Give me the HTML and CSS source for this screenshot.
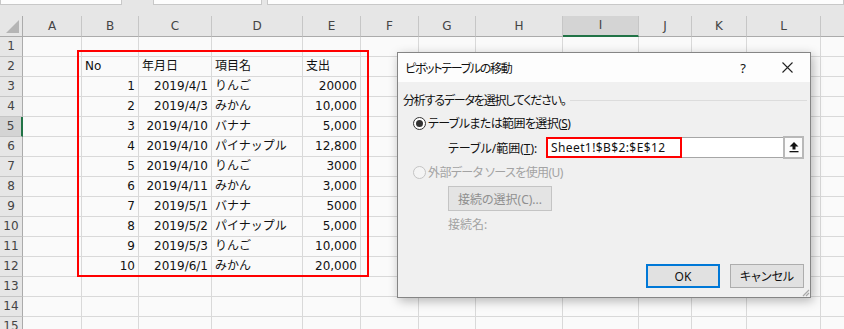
FILE: index.html
```html
<!DOCTYPE html>
<html lang="ja">
<head>
  <meta charset="UTF-8" />
  <meta name="viewport" content="width=device-width, initial-scale=1" />
  <title>ピボットテーブルの移動</title>
  <link rel="stylesheet" href="styles.css">
</head>
<body>
  <div class="excel">
    <div class="formula-strip">
      <div class="fbox name-box"></div>
      <div class="fbox fx-box"></div>
      <div class="fbox bar-box"></div>
    </div>

    <table class="sheet">
      <colgroup>
        <col style="width:23px"><col style="width:59px"><col style="width:57px"><col style="width:73px">
        <col style="width:91px"><col style="width:58px"><col style="width:58px"><col style="width:57px">
        <col style="width:87px"><col style="width:76px"><col style="width:53px"><col style="width:55px">
        <col style="width:74px"><col style="width:60px">
      </colgroup>
      <tr class="colhead">
        <th class="corner"><svg width="13" height="13" viewBox="0 0 13 13"><polygon points="13,0 13,13 0,13" fill="#b5b5b5"/></svg></th>
        <th>A</th><th>B</th><th>C</th><th>D</th><th>E</th><th>F</th><th>G</th><th>H</th>
        <th class="sel">I</th><th>J</th><th>K</th><th>L</th><th></th>
      </tr>
      <tr><th>1</th><td></td><td></td><td></td><td></td><td></td><td></td><td></td><td></td><td></td><td></td><td></td><td></td><td></td></tr>
      <tr><th>2</th><td></td><td>No</td><td>年月日</td><td>項目名</td><td>支出</td><td></td><td></td><td></td><td></td><td></td><td></td><td></td><td></td></tr>
      <tr><th>3</th><td></td><td class="num">1</td><td class="num">2019/4/1</td><td>りんご</td><td class="num">20000</td><td></td><td></td><td></td><td></td><td></td><td></td><td></td><td></td></tr>
      <tr><th>4</th><td></td><td class="num">2</td><td class="num">2019/4/3</td><td>みかん</td><td class="num">10,000</td><td></td><td></td><td></td><td></td><td></td><td></td><td></td><td></td></tr>
      <tr><th class="sel">5</th><td></td><td class="num">3</td><td class="num">2019/4/10</td><td>バナナ</td><td class="num">5,000</td><td></td><td></td><td></td><td></td><td></td><td></td><td></td><td></td></tr>
      <tr><th>6</th><td></td><td class="num">4</td><td class="num">2019/4/10</td><td>パイナップル</td><td class="num">12,800</td><td></td><td></td><td></td><td></td><td></td><td></td><td></td><td></td></tr>
      <tr><th>7</th><td></td><td class="num">5</td><td class="num">2019/4/10</td><td>りんご</td><td class="num">3000</td><td></td><td></td><td></td><td></td><td></td><td></td><td></td><td></td></tr>
      <tr><th>8</th><td></td><td class="num">6</td><td class="num">2019/4/11</td><td>みかん</td><td class="num">3,000</td><td></td><td></td><td></td><td></td><td></td><td></td><td></td><td></td></tr>
      <tr><th>9</th><td></td><td class="num">7</td><td class="num">2019/5/1</td><td>バナナ</td><td class="num">5000</td><td></td><td></td><td></td><td></td><td></td><td></td><td></td><td></td></tr>
      <tr><th>10</th><td></td><td class="num">8</td><td class="num">2019/5/2</td><td>パイナップル</td><td class="num">5,000</td><td></td><td></td><td></td><td></td><td></td><td></td><td></td><td></td></tr>
      <tr><th>11</th><td></td><td class="num">9</td><td class="num">2019/5/3</td><td>りんご</td><td class="num">10,000</td><td></td><td></td><td></td><td></td><td></td><td></td><td></td><td></td></tr>
      <tr><th>12</th><td></td><td class="num">10</td><td class="num">2019/6/1</td><td>みかん</td><td class="num">20,000</td><td></td><td></td><td></td><td></td><td></td><td></td><td></td><td></td></tr>
      <tr><th>13</th><td></td><td></td><td></td><td></td><td></td><td></td><td></td><td></td><td></td><td></td><td></td><td></td><td></td></tr>
      <tr><th>14</th><td></td><td></td><td></td><td></td><td></td><td></td><td></td><td></td><td></td><td></td><td></td><td></td><td></td></tr>
      <tr><th>15</th><td></td><td></td><td></td><td></td><td></td><td></td><td></td><td></td><td></td><td></td><td></td><td></td><td></td></tr>
    </table>

    <!-- red frame around the source range -->
    <div class="mark"></div>

    <div class="dialog">
      <div class="dlg-title">
        <span class="ttl">ピボットテーブルの移動</span>
        <span class="help">?</span>
        <span class="close">
          <svg width="11" height="11" viewBox="0 0 11 11"><path d="M0.5 0.5 L10.5 10.5 M10.5 0.5 L0.5 10.5" stroke="#222" stroke-width="1.1" fill="none"/></svg>
        </span>
      </div>

      <div class="dlg-body">
        <div class="group-title">
          <span class="tight">分析するデータを選択してください。</span>
          <span class="rule"></span>
        </div>

        <div class="opt">
          <span class="radio checked"></span>
          <span class="semi">テーブルまたは範囲を選択(<u>S</u>)</span>
        </div>

        <div class="range-row">
          <span class="range-label">テーブル/範囲(<u>T</u>):</span>
          <div class="range-box">
            <span class="range-val">Sheet1!$B$2:$E$12</span>
            <span class="range-mark"></span>
            <span class="pick">
              <svg width="10" height="11" viewBox="0 0 10 11"><polygon points="5,0 9.5,4.5 6.5,4.5 6.5,7.5 3.5,7.5 3.5,4.5 0.5,4.5" fill="#111"/><rect x="0.5" y="9" width="9" height="1.3" fill="#111"/></svg>
            </span>
          </div>
        </div>

        <div class="opt off">
          <span class="radio"></span>
          <span class="semi">外部データ ソースを使用(U)</span>
        </div>

        <div class="conn-btn">接続の選択(C)...</div>
        <div class="conn-name">接続名:</div>

        <div class="dlg-foot">
          <span class="btn ok">OK</span>
          <span class="btn">キャンセル</span>
        </div>
      </div>

      <svg class="grip" width="10" height="10" viewBox="0 0 10 10"><path d="M9 3 L3 9 M9 6 L6 9" stroke="#a8a8a8" stroke-width="1.2" fill="none"/></svg>
    </div>
  </div>
</body>
</html>
```

FILE: styles.css
```css
body {
  margin: 0;
  background: #e6e6e6;
  font-family: "DejaVu Sans", "Noto Sans CJK JP", sans-serif;
  overflow: hidden;
}

.excel {
  position: relative;
  width: 844px;
  height: 329px;
  overflow: hidden;
}

.formula-strip {
  height: 16px;
  display: flex;
  align-items: flex-start;
  background: #e6e6e6;
}

.fbox {
  height: 5px;
  background: #fdfdfd;
  border: 1px solid #c8c8c8;
  border-top: 0;
  box-sizing: border-box;
}

.name-box { width: 122px; }
.fx-box { width: 109px; margin-left: 31px; }
.bar-box { flex: 1; margin-left: 5px; }

.sheet {
  table-layout: fixed;
  border-collapse: separate;
  border-spacing: 0;
  width: 861px;
  font-size: 12px;
  color: #111;
}

.sheet th,
.sheet td {
  height: 19px;
  padding: 0 3px;
  line-height: 19px;
  white-space: nowrap;
  overflow: hidden;
}

.sheet td {
  background: #fafafa;
  border-right: 1px solid #d9d9d9;
  border-bottom: 1px solid #d9d9d9;
  text-align: left;
}

.sheet td.num { text-align: right; }

.sheet th {
  background: #e6e6e6;
  color: #444;
  font-weight: normal;
  text-align: center;
  padding: 0;
  border-right: 1px solid #c6c6c6;
  border-bottom: 1px solid #c6c6c6;
}

.sheet tr th:first-child {
  border-right: 1px solid #ababab;
}

.colhead th {
  border-bottom: 1px solid #ababab;
}

.colhead th.sel {
  background: #d4d4d4;
  height: 18px;
  border-bottom: 2px solid #217346;
}

.sheet tr th.sel:first-child {
  background: #d4d4d4;
  border-right: 2px solid #217346;
}

.corner {
  position: relative;
}

.corner svg {
  position: absolute;
  right: 3px;
  bottom: 3px;
}

.mark {
  position: absolute;
  left: 77px;
  top: 50px;
  width: 292px;
  height: 227px;
  border: 2px solid #f00;
  box-sizing: border-box;
}

/* dialog */
.dialog {
  position: absolute;
  left: 397px;
  top: 52px;
  width: 414px;
  height: 246px;
  box-sizing: border-box;
  border: 1px solid #858585;
  background: #f0f0f0;
  box-shadow: 2px 3px 10px rgba(0, 0, 0, 0.28);
  display: flex;
  flex-direction: column;
  font-family: "Noto Sans", "Noto Sans CJK JP", sans-serif;
  font-feature-settings: "palt";
  font-size: 12px;
  color: #111;
}

.tight { letter-spacing: -1.2px; }
.semi { letter-spacing: -0.6px; }

.dlg-title {
  height: 29px;
  flex: none;
  background: #fdfdfd;
  display: flex;
  align-items: center;
  padding-left: 7px;
}

.ttl {
  flex: 1;
  letter-spacing: -1.3px;
}

.help {
  width: 12px;
  text-align: center;
  font-size: 13px;
  margin-right: 33px;
}

.close {
  width: 11px;
  height: 11px;
  margin-right: 17px;
  display: flex;
}

.dlg-body {
  flex: 1;
  display: flex;
  flex-direction: column;
  padding: 0 6px 0 5px;
}

.group-title {
  margin-top: 10px;
  height: 16px;
  display: flex;
  align-items: center;
}

.rule {
  flex: 1;
  height: 1px;
  background: #dcdcdc;
  margin: 0 -3px 0 4px;
}

.opt {
  height: 16px;
  margin-top: 7px;
  margin-left: 10px;
  display: flex;
  align-items: center;
  gap: 2px;
}

.opt.off {
  margin-top: 6px;
  color: #a3a3a3;
}

.radio {
  width: 13px;
  height: 13px;
  box-sizing: border-box;
  border-radius: 50%;
  border: 1px solid #333;
  background: #fff;
  position: relative;
}

.radio.checked::after {
  content: "";
  position: absolute;
  left: 2px;
  top: 2px;
  width: 7px;
  height: 7px;
  border-radius: 50%;
  background: #333;
}

.opt.off .radio {
  border-color: #c4c4c4;
  background: #f4f4f4;
}

.range-row {
  margin-top: 6px;
  height: 21px;
  display: flex;
  align-items: center;
}

.range-label {
  width: 98px;
  margin-left: 45px;
}

.range-box {
  flex: 1;
  height: 21px;
  box-sizing: border-box;
  border: 1px solid #a6a6a6;
  background: #fff;
  display: flex;
  align-items: center;
  position: relative;
}

.range-val {
  flex: 1;
  padding-left: 4px;
  letter-spacing: 0.4px;
}

.range-mark {
  position: absolute;
  left: -1px;
  top: -1px;
  width: 136px;
  height: 21px;
  box-sizing: border-box;
  border: 2px solid #f00;
}

.pick {
  width: 21px;
  height: 23px;
  margin: -1px -1px -1px 0;
  box-sizing: border-box;
  border: 2px solid #b8b8b8;
  background: #fbfbfb;
  display: flex;
  align-items: center;
  justify-content: center;
}

.conn-btn {
  margin: 6px 0 0 45px;
  width: 104px;
  height: 25px;
  box-sizing: border-box;
  border: 1px solid #c4c4c4;
  background: #e4e4e4;
  color: #8f8f8f;
  display: flex;
  align-items: center;
  justify-content: center;
}

.conn-name {
  margin: 6px 0 0 45px;
  height: 16px;
  line-height: 16px;
  color: #a3a3a3;
}

.dlg-foot {
  margin-top: auto;
  margin-bottom: 9px;
  display: flex;
  justify-content: flex-end;
  gap: 10px;
}

.btn {
  width: 74px;
  height: 24px;
  box-sizing: border-box;
  border: 1px solid #adadad;
  background: #e1e1e1;
  display: flex;
  align-items: center;
  justify-content: center;
}

.btn.ok {
  border: 2px solid #0078d7;
}

.grip {
  position: absolute;
  right: 0;
  bottom: 0;
}
```
